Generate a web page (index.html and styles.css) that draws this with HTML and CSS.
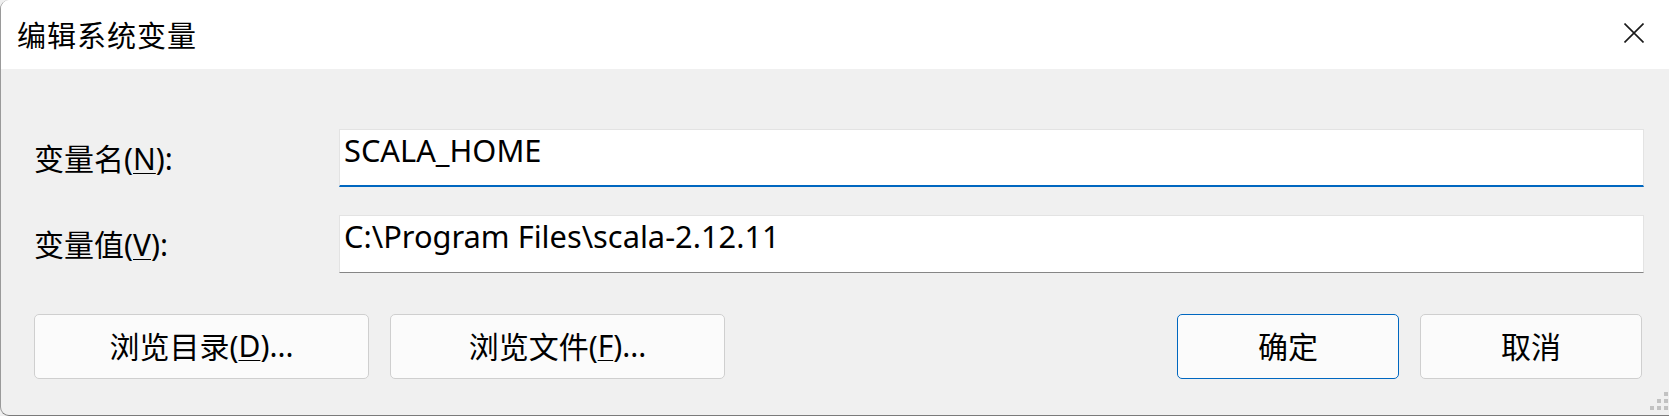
FILE: index.html
```html
<!DOCTYPE html>
<html lang="zh-CN">
<head>
<meta charset="utf-8">
<title>编辑系统变量</title>
<link rel="stylesheet" href="styles.css">
</head>
<body>
<div class="window">
  <div class="titlebar">
    <div class="title">编辑系统变量</div>
    <div class="close">
      <svg width="20" height="20" viewBox="0 0 20 20"><path d="M0.5 0.5 L19.5 19.5 M19.5 0.5 L0.5 19.5" stroke="#1a1a1a" stroke-width="1.6" fill="none"/></svg>
    </div>
  </div>
  <div class="content">
    <div class="form">
      <div class="label">变量名(<u>N</u>):</div>
      <div class="field focused">SCALA_HOME</div>
      <div class="label">变量值(<u>V</u>):</div>
      <div class="field">C:\Program Files\scala-2.12.11</div>
    </div>
    <div class="buttons">
      <div class="btn wide">浏览目录(<u>D</u>)...</div>
      <div class="btn wide">浏览文件(<u>F</u>)...</div>
      <div class="spacer"></div>
      <div class="btn narrow default">确定</div>
      <div class="btn narrow">取消</div>
    </div>
  </div>
  <div class="grip">
    <span class="dot d1"></span>
    <span class="dot d2"></span><span class="dot d3"></span>
    <span class="dot d4"></span><span class="dot d5"></span><span class="dot d6"></span>
  </div>
</div>
</body>
</html>
```
FILE: styles.css
```css
* { box-sizing: border-box; }
html, body { margin: 0; padding: 0; background: #f0f0f0; }
body {
  font-family: "Segoe UI", "Noto Sans", "Noto Sans CJK SC", sans-serif;
  color: #000;
}
.window {
  position: relative;
  width: 1669px;
  height: 416px;
  background: #f0f0f0;
  border-left: 1px solid #9a9a9a;
  border-bottom: 1px solid #7a7a7a;
  border-radius: 9px 0 0 9px;
  overflow: hidden;
  display: flex;
  flex-direction: column;
}
.titlebar {
  height: 69px;
  background: #ffffff;
  display: flex;
  align-items: center;
  justify-content: space-between;
  padding-left: 16px;
  padding-right: 25px;
}
.title {
  font-family: "Noto Sans CJK SC", sans-serif;
  font-size: 29px;
  letter-spacing: 1px;
  padding-bottom: 2px;
}
.close {
  width: 20px;
  height: 20px;
  margin-top: -3px;
  display: flex;
}
.content {
  padding: 60px 25px 0 33px;
}
.form {
  display: grid;
  grid-template-columns: 305px 1fr;
  row-gap: 28px;
  align-items: center;
}
.label {
  font-family: "Noto Sans", "Noto Sans CJK SC", sans-serif;
  font-size: 30px;
  padding-bottom: 2px;
}
.label u, .btn u { text-underline-offset: 3px; text-decoration-thickness: 1px; }
.field {
  height: 58px;
  background: #ffffff;
  border: 1px solid #e3e3e3;
  border-bottom: 1px solid #868686;
  padding: 0 4px;
  font-family: "Noto Sans", sans-serif;
  font-size: 30.8px;
  line-height: 40px;
}
.field.focused {
  border-bottom: 2px solid #0067c0;
}
.buttons {
  display: flex;
  gap: 21px;
  margin-top: 41px;
  padding-right: 2px;
}
.spacer { flex: 1; }
.btn {
  height: 65px;
  background: #fbfbfb;
  border: 1px solid #cfcfcf;
  border-radius: 5px;
  display: flex;
  align-items: center;
  justify-content: center;
  font-family: "Noto Sans", "Noto Sans CJK SC", sans-serif;
  font-size: 30px;
  padding-bottom: 3px;
}
.btn.wide { width: 335px; }
.btn.narrow { width: 222px; }
.btn.default { border-color: #0067c0; }
.grip {
  position: absolute;
  right: 0;
  bottom: 4px;
  width: 19px;
  height: 19px;
}
.dot {
  position: absolute;
  width: 4px;
  height: 4px;
  background: #c2c2c2;
}
.d1 { right: 1px; top: 0; }
.d2 { right: 8px; top: 7px; }
.d3 { right: 1px; top: 7px; }
.d4 { right: 15px; top: 14px; }
.d5 { right: 8px; top: 14px; }
.d6 { right: 1px; top: 14px; }
```
